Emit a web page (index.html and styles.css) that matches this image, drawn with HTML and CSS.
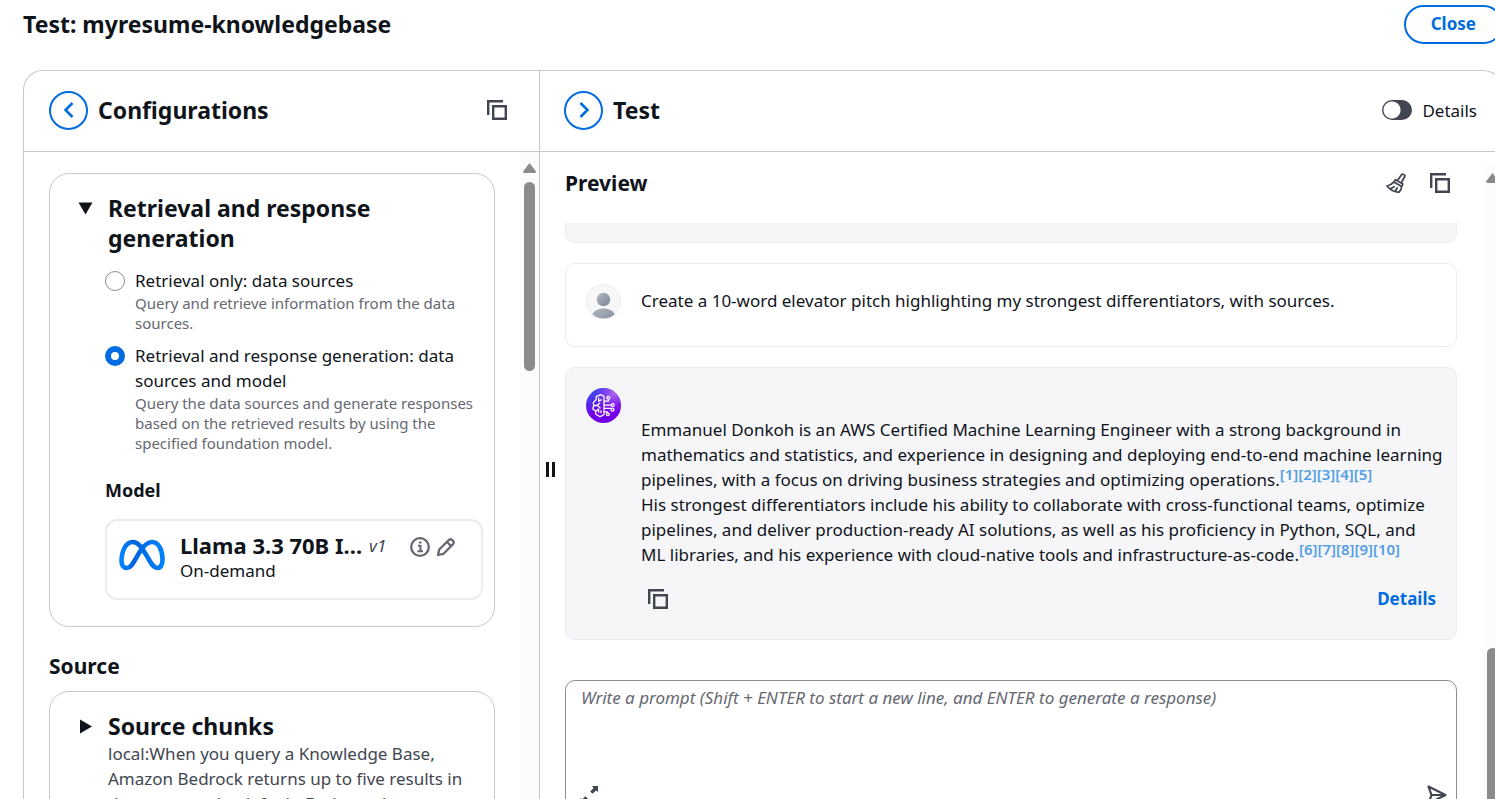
FILE: index.html
```html
<!DOCTYPE html>
<html lang="en">
<head>
<meta charset="utf-8">
<title>Test: myresume-knowledgebase</title>
<link rel="stylesheet" href="styles.css">
</head>
<body>
<svg width="0" height="0" class="defs" aria-hidden="true">
  <symbol id="copy" viewBox="0 0 20 20"><path d="M1.2 15V1.2H16M6.2 6.2h12.6v12.6H6.2z" fill="none" stroke="#424650" stroke-width="2.4"/></symbol>
</svg>
<div class="page">
  <header class="top">
    <h1>Test: myresume-knowledgebase</h1>
    <button class="close">Close</button>
  </header>
  <main class="workspace">
    <section class="config">
      <div class="bar">
        <button class="round" aria-label="Collapse configurations"><svg width="20" height="20" viewBox="0 0 20 20"><path d="M13.500 3 6.500 10l7 7"/></svg></button>
        <h2>Configurations</h2>
        <button class="icon" aria-label="Copy configuration"><svg width="20" height="20"><use href="#copy"/></svg></button>
      </div>
      <div class="config-body">
        <div class="config-content">
          <div class="card">
            <div class="card-head">
              <svg class="caret" width="15" height="15" viewBox="0 0 15 15"><path d="M0.500 1.500h14L7.500 13.500z" stroke-linejoin="round"/></svg>
              <h3>Retrieval and response<br>generation</h3>
            </div>
            <div class="card-fields">
              <div class="option">
                <input type="radio" name="mode" id="r1">
                <label for="r1">Retrieval only: data sources<small>Query and retrieve information from the data<br>sources.</small></label>
              </div>
              <div class="option">
                <input type="radio" name="mode" id="r2" checked>
                <label for="r2">Retrieval and response generation: data<br>sources and model<small>Query the data sources and generate responses<br>based on the retrieved results by using the<br>specified foundation model.</small></label>
              </div>
              <h4>Model</h4>
              <div class="model">
                <svg class="meta" width="46" height="32" viewBox="0 0 46 32">
                  <defs><linearGradient id="mg" x1="0" x2="1"><stop offset="0" stop-color="#0082fb"/><stop offset=".3" stop-color="#0064e0"/><stop offset=".65" stop-color="#0070ee"/><stop offset="1" stop-color="#0082fb"/></linearGradient></defs>
                  <path d="M2.500 22C2.500 12 7 3 13.500 3 20 3 23 9 29 19c4 7 6 10 9 10 3.500 0 5.500-3 5.500-8.500C43.500 11 39.500 3 33 3c-5 0-8.500 4-12 9.500C14.500 23 12.500 29 8 29c-3.500 0-5.500-3-5.500-7z" fill="none" stroke="url(#mg)" stroke-width="4.600"/>
                </svg>
                <div class="model-text">
                  <div class="model-name"><strong>Llama 3.3 70B I...</strong><em>v1</em></div>
                  <div>On-demand</div>
                </div>
                <div class="model-actions">
                  <button class="icon" aria-label="Model information"><svg width="20" height="20" viewBox="0 0 20 20"><circle cx="10" cy="10" r="8.800" fill="none" stroke="#656871" stroke-width="2.300"/><path d="M8 8.800h2.500v5.500M7.500 14.300h5.500M9 5.500h2.500" fill="none" stroke="#656871" stroke-width="2"/></svg></button>
                  <button class="icon" aria-label="Change model"><svg width="20" height="20" viewBox="0 0 20 20"><path d="M2 18l1.200-5.500L12.800 3c1-1 2.300-1 3.300 0l.9.900c1 1 1 2.300 0 3.300L7.500 16.800zM11 5l4 4" fill="none" stroke="#656871" stroke-width="2.300" stroke-linejoin="round"/></svg></button>
                </div>
              </div>
            </div>
          </div>
          <h3 class="source">Source</h3>
          <div class="card">
            <div class="card-head">
              <svg class="caret" width="15" height="15" viewBox="0 0 15 15"><path d="M2 0.500v14L14 7.500z"/></svg>
              <div>
                <h3>Source chunks</h3>
                <p>local:When you query a Knowledge Base,<br>Amazon Bedrock returns up to five results in<br>the response by default. Each result</p>
              </div>
            </div>
          </div>
        </div>
        <div class="scroll" aria-hidden="true"><svg width="13" height="10" viewBox="0 0 13 10"><path d="M6.500 0 13 8.500q0 1.500-1.500 1.500h-10Q0 10 0 8.500z"/></svg><i></i></div>
      </div>
    </section>
    <section class="test">
      <button class="grip" aria-label="Resize panels"></button>
      <div class="bar">
        <button class="round" aria-label="Collapse test"><svg width="20" height="20" viewBox="0 0 20 20"><path d="M6.500 3 13.500 10l-7 7"/></svg></button>
        <h2>Test</h2>
        <label class="toggle"><input type="checkbox" role="switch">Details</label>
      </div>
      <div class="test-body">
        <div class="test-content">
          <div class="preview">
            <h3>Preview</h3>
            <button class="icon" aria-label="Clear conversation"><svg width="20" height="20" viewBox="0 0 20 20" fill="none" stroke="#424650" stroke-width="1.800" stroke-linejoin="round" stroke-linecap="round"><path d="M11.500 7.500 15.500 1.800c1-1.400 4-.1 3.200 1.700L15.500 9.500M9.500 6.800l7.300 4.200-1 2.500-8-4.500zM8 8.800C6 11 4 12.200 1 13c2.500 3 7 6 12 6.200 1.800-1.500 2.500-3.500 2.700-6M5 15.500l3-1.800M9.500 18l1.500-3"/></svg></button>
            <button class="icon" aria-label="Copy conversation"><svg width="20" height="20"><use href="#copy"/></svg></button>
          </div>
          <div class="message answer tail"></div>
          <div class="message">
            <svg class="avatar" width="35" height="35" viewBox="0 0 36 36">
              <defs><linearGradient id="ug" x1="0" x2="1" y2="1"><stop stop-color="#b0b8c2"/><stop offset="1" stop-color="#7d8794"/></linearGradient><clipPath id="uc"><circle cx="18" cy="18" r="17.500"/></clipPath></defs>
              <circle cx="18" cy="18" r="17.500" fill="#f7f7f8" stroke="#ebebef"/>
              <circle cx="18" cy="16" r="7" fill="url(#ug)"/><ellipse cx="18" cy="34" rx="12" ry="9" fill="url(#ug)" clip-path="url(#uc)"/>
            </svg>
            <p>Create a 10-word elevator pitch highlighting my strongest differentiators, with sources.</p>
          </div>
          <div class="message answer">
            <svg class="avatar" width="35" height="35" viewBox="0 0 36 36">
              <defs><linearGradient id="bg" x1=".15" y1=".1" x2=".45" y2=".9"><stop stop-color="#3b4cf0"/><stop offset=".75" stop-color="#7200e8"/></linearGradient><radialGradient id="bh" cx=".8" cy=".15" r=".6"><stop stop-color="#b46cf5"/><stop offset="1" stop-color="#8a20e8" stop-opacity="0"/></radialGradient></defs>
              <circle cx="18" cy="18" r="18" fill="url(#bg)"/><circle cx="18" cy="18" r="18" fill="url(#bh)"/>
              <g fill="none" stroke="#fff" stroke-width="1.300" stroke-linejoin="round"><path d="M18.500 8.500 15 6.800l-4.500 2v3L7.500 15l.5 3-1 3.500 3 2.500v3l4.500 2.500 4-2z"/><path d="M13 10v3.500l3-1.500M8 18h3.500l3-3M12 18l3 3M10 24l3-2.500v4M15.500 26v-3"/><path d="M18.500 13.500H23v-2M18.500 17.500h7.500M18.500 21H26M18.500 24.500H22v1"/><circle cx="23" cy="10" r="1.500"/><circle cx="27.500" cy="17.500" r="1.500"/><circle cx="27.200" cy="22.300" r="1.500"/><circle cx="22.500" cy="27" r="1.500"/></g>
            </svg>
            <div class="reply">
              <p>Emmanuel Donkoh is an AWS Certified Machine Learning Engineer with a strong background in<br>mathematics and statistics, and experience in designing and deploying end-to-end machine learning<br>pipelines, with a focus on driving business strategies and optimizing operations.<span class="refs"><a href="#1">[1]</a><a href="#2">[2]</a><a href="#3">[3]</a><a href="#4">[4]</a><a href="#5">[5]</a></span><br>His strongest differentiators include his ability to collaborate with cross-functional teams, optimize<br>pipelines, and deliver production-ready AI solutions, as well as his proficiency in Python, SQL, and<br>ML libraries, and his experience with cloud-native tools and infrastructure-as-code.<span class="refs"><a href="#6">[6]</a><a href="#7">[7]</a><a href="#8">[8]</a><a href="#9">[9]</a><a href="#10">[10]</a></span></p>
              <div class="reply-actions">
                <button class="icon" aria-label="Copy response"><svg width="20" height="20"><use href="#copy"/></svg></button>
                <a href="#details">Details</a>
              </div>
            </div>
          </div>
          <div class="prompt">
            <textarea aria-label="Prompt" placeholder="Write a prompt (Shift + ENTER to start a new line, and ENTER to generate a response)"></textarea>
            <div class="prompt-actions">
              <button class="icon" aria-label="Expand"><svg width="20" height="20" viewBox="0 0 20 20"><path d="M13 1h6v6l-2-1.500-3.500 3.300-2.300-2.300L14.500 3zM7 19H1v-6l2 1.500 3.500-3.300 2.300 2.300L5.500 17z" fill="#424650"/></svg></button>
              <button class="icon" aria-label="Send"><svg width="20" height="20" viewBox="0 0 20 20"><path d="M1.500 1.500 18.500 10l-17 8.500L4.500 10zM4.500 10h13" fill="none" stroke="#424650" stroke-width="2.200" stroke-linejoin="round"/></svg></button>
            </div>
          </div>
        </div>
        <div class="scroll low" aria-hidden="true"><svg width="13" height="10" viewBox="0 0 13 10"><path d="M6.500 0 13 8.500q0 1.500-1.500 1.500h-10Q0 10 0 8.500z"/></svg><i></i></div>
      </div>
    </section>
  </main>
</div>
</body>
</html>
```
FILE: styles.css
```css
* { box-sizing: border-box; }
body {
  margin: 0;
  height: 100vh;
  overflow: hidden;
  background: #fff;
  color: #0f141a;
  font: 17px/25px "Noto Sans", "Open Sans", sans-serif;
}
h1, h2, h3, h4, p { margin: 0; }
h1, h2, h3 { font-weight: 700; font-size: 23px; line-height: 30px; }
button { padding: 0; border: 0; background: none; font: inherit; color: inherit; }
svg { display: block; flex: none; }
a { color: #006ce0; text-decoration: none; }
.defs { position: absolute; }

.page {
  display: flex;
  flex-direction: column;
  height: 100vh;
  margin-right: -8px;
  padding-left: 23px;
}
.top { display: flex; justify-content: space-between; align-items: flex-start; padding-top: 5px; height: 70px; flex: none; }
.top h1 { padding-top: 4px; }
.close {
  height: 39px;
  padding: 0 25px 2px;
  border: 2px solid #006ce0;
  border-radius: 20px;
  color: #006ce0;
  font-weight: 700;
}
.workspace {
  flex: 1;
  min-height: 0;
  display: flex;
  border: 1px solid #c6c6cd;
  border-bottom: 0;
  border-radius: 20px 20px 0 0;
}
.config, .test { display: flex; flex-direction: column; min-height: 0; }
.config { flex: 0 0 516px; border-right: 1px solid #c6c6cd; }
.test { flex: 1; min-width: 0; position: relative; }
.bar {
  flex: none;
  display: flex;
  align-items: center;
  gap: 10px;
  height: 81px;
  padding: 0 32px 2px 25px;
  border-bottom: 1px solid #c6c6cd;
}
.bar h2 { flex: 1; }
.test .bar { padding: 0 25px 2px 24px; }
.round {
  display: grid;
  place-items: center;
  width: 39px;
  height: 39px;
  border: 2px solid #006ce0;
  border-radius: 50%;
}
.round path { fill: none; stroke: #006ce0; stroke-width: 2.5; }
.toggle { display: flex; align-items: center; gap: 10px; }
.toggle input {
  appearance: none;
  width: 30px;
  height: 20px;
  margin: 0;
  border-radius: 10px;
  background: radial-gradient(circle at 10px 10px, #fff 8px, #424650 9px);
}

.config-body, .test-body { flex: 1; min-height: 0; display: flex; overflow: hidden; }
.config-content { flex: 1; padding: 21px 25px 0; white-space: nowrap; }
.scroll { flex: none; width: 19px; padding: 11px 0 0 3px; background: #fcfcfc; display: flex; flex-direction: column; gap: 9px; }
.scroll path { fill: #8b8b8b; }
.scroll i { width: 11px; margin-left: 1px; height: 189px; border-radius: 6px; background: #8b8b8b; }
.card { border: 1px solid #c6c6cd; border-radius: 20px; padding: 19px 11px 26px 28px; }
.card-head { display: flex; gap: 15px; }
.caret { margin-top: 8px; fill: #0f141a; }
.card-head p { color: #424650; }
.card-fields { padding: 15px 0 0 27px; }
.option { display: flex; gap: 10px; margin-bottom: 10px; }
.option input {
  appearance: none;
  flex: none;
  width: 20px;
  height: 20px;
  margin: 3px 0 0;
  border: 1px solid #8c8c94;
  border-radius: 50%;
}
.option input:checked { border: 6px solid #006ce0; }
.option small { display: block; font-size: 15px; line-height: 20px; color: #656871; }
h4 { padding-top: 15px; font-size: 18px; line-height: 25px; font-weight: 700; }
.model {
  display: flex;
  gap: 15px;
  margin-top: 16px;
  min-height: 81px;
  padding: 12px 25px 12px 12px;
  border: 2px solid #ebebf0;
  border-radius: 12px;
}
.meta { margin-top: 6px; }
.model-text { flex: 1; }
.model-name { display: flex; align-items: center; gap: 7px; }
.model-name strong { font-size: 22px; font-weight: 700; }
.model-name em { color: #424650; font-size: 17px; }
.model-actions { display: flex; gap: 6px; align-self: flex-start; padding-top: 4px; }
.source { padding: 24px 0 10px; font-size: 21px; }

.test-content { flex: 1; min-width: 0; padding: 0 26px 0 25px; white-space: nowrap; }
.preview { display: flex; align-items: center; gap: 24px; height: 71px; padding: 0 7px 10px 0; }
.preview h3 { flex: 1; font-size: 21px; }
.message {
  display: flex;
  gap: 20px;
  margin-bottom: 20px;
  min-height: 84px;
  padding: 20px;
  border: 1px solid #ebebf0;
  border-radius: 10px;
}
.message p { padding-top: 4px; }
.answer { background: #f6f6f9; min-height: 273px; }
.answer p { padding-top: 29px; }
.tail { min-height: 0; height: 20px; padding: 0; border-top: 0; border-radius: 0 0 10px 10px; }
.reply { flex: 1; min-width: 0; }
.refs { font-size: 15px; line-height: 0; vertical-align: 6px; font-weight: 600; }
.refs a { color: #539fe5; }
.reply-actions { display: flex; justify-content: space-between; align-items: center; padding: 19px 0 0 7px; font-weight: 700; }
.prompt { margin-top: 40px; height: 140px; border: 1px solid #8c8c94; border-radius: 10px; padding: 4px 9px 0 13px; }
textarea { display: block; width: 100%; height: 100px; padding: 0 2px; border: 0; resize: none; outline: 0; font: inherit; }
textarea::placeholder { color: #656871; font-style: italic; }
.prompt-actions { display: flex; justify-content: space-between; }
.low { align-self: flex-start; margin: 11px 0 0; padding-top: 10px; gap: 465px; height: 100%; }
.low i { height: 160px; }
.grip {
  position: absolute;
  left: 6px;
  top: 391px;
  width: 9px;
  height: 15px;
  border: solid #0f141a;
  border-width: 0 3px;
}
```
